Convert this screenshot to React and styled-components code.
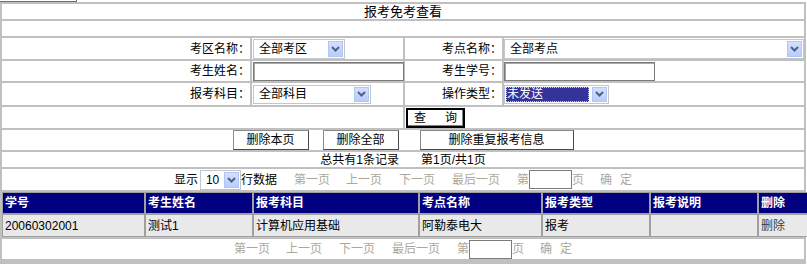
import React from "react";
import styled, { createGlobalStyle } from "styled-components";

const Global = createGlobalStyle`
  html, body { margin: 0; padding: 0; background: #fff; }
  body {
    font-family: "Liberation Sans", "Noto Sans CJK SC", sans-serif;
    font-size: 12px;
    color: #000;
  }
`;

const Page = styled.div`
  width: 807px;
`;

const Remnant = styled.div`
  width: 76px;
  height: 1px;
  border-bottom: 1px solid #6e6e6e;
  border-right: 1px solid #6e6e6e;
`;

const Frame = styled.table`
  width: 806px;
  border-collapse: separate;
  border-spacing: 2px;
  background: #c0c0c0;
  table-layout: fixed;
`;

const Cell = styled.td`
  background: #fff;
  padding: ${(p) => p.$pad || "0"};
  height: ${(p) => p.$h}px;
  text-align: ${(p) => p.$align || "left"};
  vertical-align: middle;
  white-space: nowrap;
  line-height: 14px;
  font-size: ${(p) => p.$fs || 12}px;
`;

const Footer = styled.div`
  width: 806px;
  height: 4px;
  background: #c0c0c0;
`;

const SelectBox = styled.div`
  display: inline-flex;
  align-items: center;
  box-sizing: border-box;
  width: ${(p) => p.$w}px;
  height: ${(p) => p.$h || 20}px;
  border: 1px solid #c3c7cc;
  background: #fff;
  padding: 1px;
  vertical-align: middle;
`;

const SelectText = styled.span`
  flex: 1;
  height: 100%;
  display: flex;
  align-items: center;
  padding-left: ${(p) => (p.$active ? 1 : 4)}px;
  margin-right: ${(p) => (p.$active ? 3 : 0)}px;
  box-sizing: border-box;
  color: ${(p) => (p.$active ? "#fff" : "#000")};
  background: ${(p) => (p.$active ? "#33339a" : "transparent")};
  outline: ${(p) => (p.$active ? "1px dotted #e8d84a" : "none")};
  outline-offset: -1px;
  overflow: hidden;
`;

const Arrow = styled.span`
  width: 15px;
  height: 100%;
  box-sizing: border-box;
  border: 1px solid #b1c6f5;
  background: linear-gradient(#d3e0fd, #b9cdfa);
  display: flex;
  align-items: center;
  justify-content: center;
`;

const TextInput = styled.div`
  display: inline-block;
  box-sizing: border-box;
  width: ${(p) => p.$w}px;
  height: ${(p) => p.$h}px;
  border: 1px solid #7a7a7a;
  box-shadow: inset 1px 1px 0 #a8a8a8;
  background: #fff;
  vertical-align: middle;
`;

const QueryButton = styled.button`
  box-sizing: border-box;
  width: 59px;
  height: 20px;
  margin-left: 1px;
  background: #fff;
  border: 2px solid #000;
  box-shadow: inset -1px -1px 0 #808080;
  font: inherit;
  font-size: 12px;
  padding: 0;
  display: inline-flex;
  align-items: center;
  justify-content: center;
  gap: 19px;
  vertical-align: middle;
`;

const ButtonBar = styled.div`
  display: flex;
  justify-content: center;
  align-items: center;
`;

const GrayButton = styled.button`
  box-sizing: border-box;
  width: ${(p) => p.$w}px;
  height: 20px;
  margin-left: ${(p) => p.$ml || 0}px;
  background: #fff;
  border: 1px solid #8a8a8a;
  border-right-color: #4a4a4a;
  border-bottom-color: #4a4a4a;
  font: inherit;
  font-size: 12px;
  padding: 0;
`;

const Gap = styled.span`
  display: inline-block;
  width: ${(p) => p.$w}px;
`;

const Nav = styled.div`
  display: flex;
  justify-content: center;
  align-items: center;
  height: 100%;
`;

const Link = styled.span`
  color: #aca899;
  margin-left: ${(p) => p.$ml || 0}px;
`;

const PageInput = styled.div`
  box-sizing: border-box;
  width: 43px;
  height: 19px;
  border: 1px solid #7b7b7b;
  background: #fff;
`;

const Grid = styled.table`
  width: 802px;
  border-collapse: separate;
  border-spacing: 0;
  table-layout: fixed;
`;

const Th = styled.th`
  background: #000080;
  color: #fff;
  font-weight: bold;
  text-align: left;
  border: 1px solid #a0a0a0;
  padding: 0 0 0 2px;
  height: 20px;
  width: ${(p) => p.$w - 2}px;
  line-height: 14px;
`;

const Td = styled.td`
  background: #e9e9e9;
  color: ${(p) => p.$color || "#000"};
  border: 1px solid #a0a0a0;
  padding: 0 0 0 2px;
  height: 21px;
  line-height: 14px;
`;

const Chevron = () => (
  <svg width="9" height="6" viewBox="0 0 9 6">
    <path d="M1 1 L4.5 4.5 L8 1" fill="none" stroke="#4d6185" strokeWidth="2" />
  </svg>
);

const Select = ({ w, h, children, active }) => (
  <SelectBox $w={w} $h={h}>
    <SelectText $active={active}>{children}</SelectText>
    <Arrow>
      <Chevron />
    </Arrow>
  </SelectBox>
);

const Pager = ({ withSize }) => (
  <Nav>
    {withSize && (
      <>
        <span>显示</span>
        <Gap $w={2} />
        <Select w={41} h={20}>10</Select>
        <span>行数据</span>
      </>
    )}
    <Link $ml={withSize ? 17 : 0}>第一页</Link>
    <Link $ml={16}>上一页</Link>
    <Link $ml={17}>下一页</Link>
    <Link $ml={17}>最后一页</Link>
    <Link $ml={17}>第</Link>
    <PageInput />
    <Link>页</Link>
    <Link $ml={16}>确</Link>
    <Link $ml={8}>定</Link>
  </Nav>
);

const columns = [
  ["学号", 141],
  ["考生姓名", 106],
  ["报考科目", 164],
  ["考点名称", 121],
  ["报考类型", 106],
  ["报考说明", 106],
  ["删除", 58],
];

const row = ["20060302001", "测试1", "计算机应用基础", "阿勒泰电大", "报考", "", "删除"];

export default function App() {
  return (
    <Page>
      <Global />
      <Remnant />
      <Frame>
        <colgroup>
          <col style={{ width: 248 }} />
          <col style={{ width: 151 }} />
          <col style={{ width: 97 }} />
          <col style={{ width: 300 }} />
        </colgroup>
        <tbody>
          <tr>
            <Cell colSpan={4} $h={15} $align="center" $fs={13}>报考免考查看</Cell>
          </tr>
          <tr>
            <Cell colSpan={4} $h={15} />
          </tr>
          <tr>
            <Cell $h={21} $align="right">考区名称：</Cell>
            <Cell $h={21} $pad="0 0 0 1px"><Select w={92}>全部考区</Select></Cell>
            <Cell $h={21} $align="right">考点名称：</Cell>
            <Cell $h={21}><Select w={300}>全部考点</Select></Cell>
          </tr>
          <tr>
            <Cell $h={20} $align="right">考生姓名：</Cell>
            <Cell $h={20} $pad="0 0 0 1px"><TextInput $w={151} $h={19} /></Cell>
            <Cell $h={20} $align="right">考生学号：</Cell>
            <Cell $h={20}><TextInput $w={151} $h={19} /></Cell>
          </tr>
          <tr>
            <Cell $h={22} $align="right">报考科目：</Cell>
            <Cell $h={22} $pad="0 0 0 1px"><Select w={118} h={19}>全部科目</Select></Cell>
            <Cell $h={22} $align="right">操作类型：</Cell>
            <Cell $h={22}><Select w={105} h={19} active>未发送</Select></Cell>
          </tr>
          <tr>
            <Cell colSpan={2} $h={21} />
            <Cell colSpan={2} $h={21}>
              <QueryButton><span>查</span><span>询</span></QueryButton>
            </Cell>
          </tr>
          <tr>
            <Cell colSpan={4} $h={20}>
              <ButtonBar>
                <GrayButton $w={76}>删除本页</GrayButton>
                <GrayButton $w={76} $ml={14}>删除全部</GrayButton>
                <GrayButton $w={154} $ml={21}>删除重复报考信息</GrayButton>
              </ButtonBar>
            </Cell>
          </tr>
          <tr>
            <Cell colSpan={4} $h={15} $align="center">
              总共有1条记录<Gap $w={22} />第1页/共1页
            </Cell>
          </tr>
          <tr>
            <Cell colSpan={4} $h={21}>
              <Pager withSize />
            </Cell>
          </tr>
          <tr>
            <Cell colSpan={4} $h={45}>
              <Grid>
                <thead>
                  <tr>
                    {columns.map(([t, w]) => (
                      <Th key={t} $w={w}>{t}</Th>
                    ))}
                  </tr>
                </thead>
                <tbody>
                  <tr>
                    {row.map((t, i) => (
                      <Td key={i} $color={i === 6 ? "#3c3c3c" : undefined}>{t}</Td>
                    ))}
                  </tr>
                </tbody>
              </Grid>
            </Cell>
          </tr>
          <tr>
            <Cell colSpan={4} $h={20}>
              <Pager />
            </Cell>
          </tr>
        </tbody>
      </Frame>
      <Footer />
    </Page>
  );
}
